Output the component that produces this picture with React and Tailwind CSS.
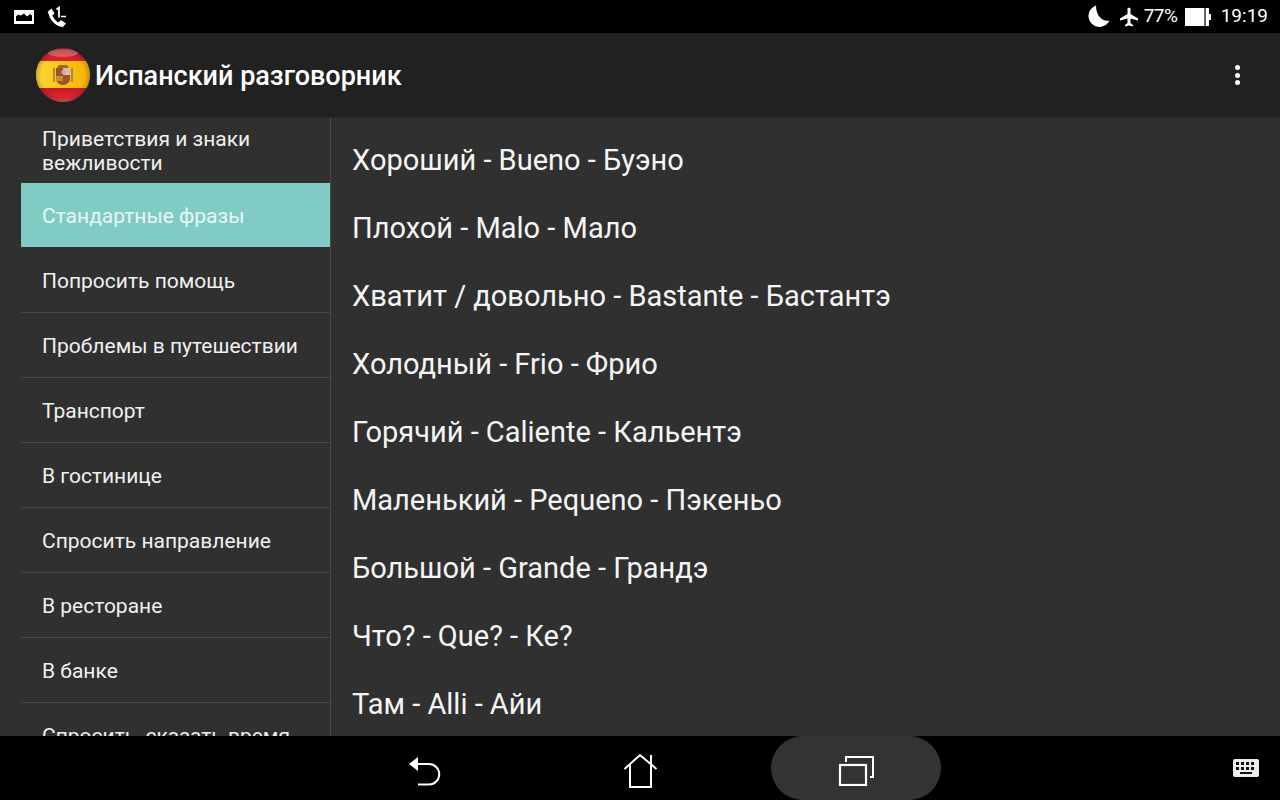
const TOPICS = [
  "Приветствия и знаки вежливости",
  "Стандартные фразы",
  "Попросить помощь",
  "Проблемы в путешествии",
  "Транспорт",
  "В гостинице",
  "Спросить направление",
  "В ресторане",
  "В банке",
  "Спросить, сказать время",
];

const PHRASES = [
  "Хороший - Bueno - Буэно",
  "Плохой - Malo - Мало",
  "Хватит / довольно - Bastante - Бастантэ",
  "Холодный - Frio - Фрио",
  "Горячий - Caliente - Кальентэ",
  "Маленький - Pequeno - Пэкеньо",
  "Большой - Grande - Грандэ",
  "Что? - Que? - Ке?",
  "Там - Alli - Айи",
];

function SpainFlag() {
  return (
    <svg width="56" height="56" viewBox="0 0 56 56" className="shrink-0">
      <defs>
        <linearGradient id="red" x1="0" y1="0" x2="0" y2="1">
          <stop offset="0" stopColor="#a81c28" />
          <stop offset="0.2" stopColor="#d8242c" />
          <stop offset="0.75" stopColor="#c81a24" />
          <stop offset="0.9" stopColor="#d92a34" />
          <stop offset="1" stopColor="#f0606a" />
        </linearGradient>
        <linearGradient id="gold" x1="0" y1="0" x2="1" y2="0">
          <stop offset="0" stopColor="#fbd93a" />
          <stop offset="0.5" stopColor="#f8c412" />
          <stop offset="1" stopColor="#f4b20c" />
        </linearGradient>
        <radialGradient id="shade" cx="0.5" cy="0.5" r="0.5">
          <stop offset="0.8" stopColor="#000" stopOpacity="0" />
          <stop offset="1" stopColor="#000" stopOpacity="0.2" />
        </radialGradient>
        <clipPath id="disc">
          <circle cx="28" cy="28" r="27" />
        </clipPath>
      </defs>
      <g clipPath="url(#disc)">
        <rect width="56" height="56" fill="url(#red)" />
        <rect y="14" width="56" height="27" fill="url(#gold)" />
        <rect x="18" y="21" width="2" height="14" fill="#a98a45" />
        <rect x="36" y="21" width="2" height="14" fill="#a98a45" />
        <path d="M22 21l2-3h8l2 3z" fill="#9c6a2a" />
        <path d="M21 21h14v11a7 6 0 0 1-14 0z" fill="#a0522d" />
        <rect x="28" y="21" width="7" height="7" fill="#d9bfae" />
        <circle cx="28.500" cy="25" r="2.200" fill="#d8a0b0" />
        <rect x="21" y="29" width="7" height="5" fill="#c0922e" />
        <circle cx="28" cy="28" r="27" fill="url(#shade)" />
        <ellipse cx="28" cy="6" rx="15" ry="4" fill="#fff" opacity="0.25" />
      </g>
    </svg>
  );
}

function StatusBar() {
  return (
    <div className="h-[33px] shrink-0 bg-black flex items-center justify-between pl-[14px] pr-[12px] text-white">
      <div className="flex items-center gap-[12px]">
        <svg width="20" height="16" viewBox="0 0 20 16">
          <path d="M0 1h20v14H0z M2 12h16V6.500l-2-1.500-3 2.500-3-3-3 2-3-1-2 2z" fill="#fff" fillRule="evenodd" />
        </svg>
        <svg width="22" height="24" viewBox="0 0 22 24" fill="none">
          <path d="M4 5.500C3.500 12 9 19 15.500 20.500" stroke="#fff" strokeWidth="3" />
          <path d="M1.500 7.500L5.500 3.500l3 5-3.500 3z" fill="#fff" />
          <path d="M12 18l3-3 5 3.500-3.500 4z" fill="#fff" />
          <path d="M10.500 4.500L13 2.500v10" stroke="#fff" strokeWidth="1.800" />
          <path d="M15 11.500h5" stroke="#fff" strokeWidth="1.500" />
        </svg>
      </div>
      <div className="flex items-center text-[19px]">
        <svg width="23" height="23" viewBox="0 0 23 23" className="mr-[10px]">
          <path d="M9 0.500A11 11 0 1 0 22.500 15.500C16 17 9 11.500 9 0.500z" fill="#fff" />
        </svg>
        <svg width="18" height="20" viewBox="0 0 18 20" className="mr-[6px]">
          <path
            d="M7.500 1.500C7.500 .5 10.500 .5 10.500 1.500V7L18 11.500V13.500L10.500 11.500V16L13 18V19.500L9 18.500L5 19.500V18L7.500 16V11.500L0 13.500V11.500L7.500 7z"
            fill="#fff"
          />
        </svg>
        <span className="w-[35px] mr-[6px] whitespace-nowrap tracking-[-0.5px]">77%</span>
        <span className="flex items-center mr-[10px]">
          <span className="w-[24px] h-[18px] bg-white flex justify-end pr-[3px]">
            <span className="w-[2px] h-full bg-[#666]" />
          </span>
          <span className="w-[2px] h-[6px] bg-white" />
        </span>
        <span>19:19</span>
      </div>
    </div>
  );
}

function ActionBar() {
  return (
    <div className="h-[85px] shrink-0 bg-[#212121] flex items-center pl-[35px] pr-[40px] border-b border-[#282828]">
      <SpainFlag />
      <h1 className="ml-[4px] mt-[3px] flex-1 font-medium text-[27px] text-white">Испанский разговорник</h1>
      <div className="flex flex-col gap-[2.500px]">
        <span className="w-[5px] h-[5px] rounded-full bg-white" />
        <span className="w-[5px] h-[5px] rounded-full bg-white" />
        <span className="w-[5px] h-[5px] rounded-full bg-white" />
      </div>
    </div>
  );
}

function Sidebar() {
  return (
    <div className="w-[331px] shrink-0 h-full overflow-hidden pl-[21px] border-r border-[#4a4a4a]">
      {TOPICS.map((topic, i) => (
        <div
          key={topic}
          className={
            i === 1
              ? "h-[65px] flex items-center pt-[2px] pl-[21px] pr-[20px] text-[21px] leading-[24px] bg-[#80cbc4] text-[#e6f7f5] border-b border-[#303030]"
              : i === 0
                ? "h-[65px] flex items-center pl-[21px] pr-[20px] text-[21px] leading-[24px] text-[#f0f0f0]"
                : "h-[65px] flex items-center pt-[2px] pl-[21px] pr-[20px] text-[21px] leading-[24px] text-[#f0f0f0] border-b border-[#484848]"
          }
        >
          {topic}
        </div>
      ))}
    </div>
  );
}

function NavBar() {
  return (
    <div className="relative h-[64px] shrink-0 bg-black flex items-center text-white">
      <svg width="34" height="38" viewBox="0 0 34 38" fill="none" className="ml-[408px]">
        <path d="M1 15l9-7v14z" fill="#fff" />
        <path d="M8 15h13a10 10 0 0 1 0 20.500H10" stroke="#fff" strokeWidth="2" />
      </svg>
      <svg width="36" height="40" viewBox="0 0 36 40" fill="none" className="ml-[180px]">
        <path d="M2.500 21L18 7l16.500 14M8 16v23h21V16M29 7v9" stroke="#fff" strokeWidth="2" />
      </svg>
      <div className="ml-[113px] w-[170px] h-[64px] rounded-full bg-[#333333] flex items-center justify-center">
        <svg width="38" height="36" viewBox="0 0 38 36" fill="none">
          <path d="M9 12V7h27v20h-3" stroke="#fff" strokeWidth="2" />
          <rect x="3" y="15" width="26" height="20" stroke="#fff" strokeWidth="2.200" />
        </svg>
      </div>
      <svg width="26" height="18" viewBox="0 0 26 18" className="absolute right-[21px] top-[23px]">
        <rect width="26" height="18" rx="2" fill="#eee" />
        <g fill="#111">
          <rect x="3" y="3" width="3" height="3" />
          <rect x="8" y="3" width="3" height="3" />
          <rect x="13" y="3" width="3" height="3" />
          <rect x="18" y="3" width="3" height="3" />
          <rect x="3" y="8" width="3" height="3" />
          <rect x="8" y="8" width="3" height="3" />
          <rect x="13" y="8" width="3" height="3" />
          <rect x="18" y="8" width="3" height="3" />
          <rect x="7" y="13" width="12" height="2" />
        </g>
      </svg>
    </div>
  );
}

export default function App() {
  return (
    <div className="w-[1280px] h-[800px] flex flex-col overflow-hidden bg-[#303030] font-['Roboto',sans-serif]">
      <StatusBar />
      <ActionBar />
      <div className="flex-1 min-h-0 flex">
        <Sidebar />
        <div className="flex-1 overflow-hidden pt-[9px] pl-[21px]">
          {PHRASES.map((phrase) => (
            <div key={phrase} className="h-[68px] flex items-center text-[29px] text-[#f5f5f5]">
              {phrase}
            </div>
          ))}
        </div>
      </div>
      <NavBar />
    </div>
  );
}
